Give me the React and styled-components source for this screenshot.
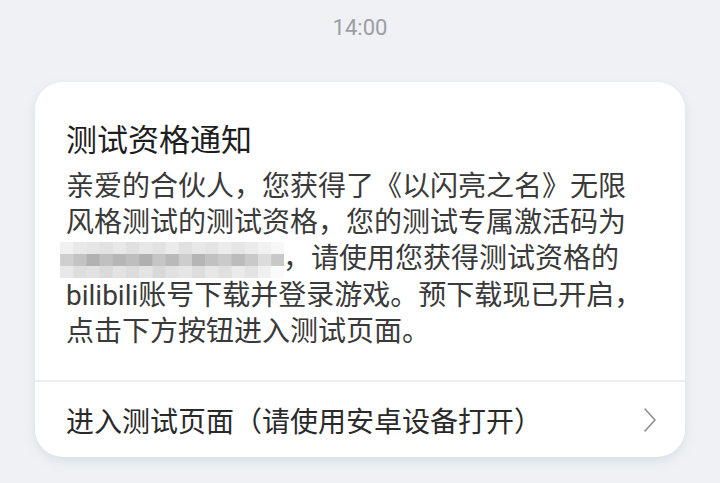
import React from "react";
import styled, { createGlobalStyle } from "styled-components";

const Global = createGlobalStyle`
  html, body { margin: 0; padding: 0; background: #eff1f4; }
  body { width: 720px; height: 483px; overflow: hidden; }
`;

const Page = styled.div`
  width: 720px;
  height: 483px;
  box-sizing: border-box;
  padding: 14px 35px 0 35px;
  display: flex;
  flex-direction: column;
  align-items: stretch;
  font-family: Roboto, "Noto Sans CJK SC", "Noto Sans", sans-serif;
`;

const Time = styled.div`
  font-size: 22px;
  line-height: 28px;
  color: #9b9ea3;
  text-align: center;
`;

const Card = styled.div`
  margin-top: 40px;
  background: #ffffff;
  border-radius: 28px;
  box-shadow: 0 4px 10px rgba(170, 195, 215, 0.35);
  overflow: hidden;
`;

const Content = styled.div`
  padding: 37px 37px 30px 31px;
`;

const Title = styled.div`
  font-size: 31px;
  line-height: 44px;
  color: #1e1e1e;
  margin-bottom: 6px;
`;

const Body = styled.div`
  font-size: 28px;
  line-height: 36px;
  color: #3a3a3a;
`;

const Divider = styled.div`
  height: 2px;
  background: #eceef1;
`;

const Action = styled.div`
  height: 75px;
  display: flex;
  align-items: center;
  justify-content: space-between;
  padding: 0 28px 0 31px;
  font-size: 28px;
  color: #2a2a2a;
`;

const Mosaic = styled.svg`
  display: inline-block;
  vertical-align: -10px;
  margin-left: -6px;
  margin-right: -1px;
`;

const blocks = [
  ["#f1f1f1", "#e9e9e9", "#e6e6e6", "#e2e2e2", "#e8e8e8", "#e0e0e0", "#e7e7e7", "#e3e3e3", "#ebebeb", "#e1e1e1", "#e8e8e8", "#e4e4e4", "#ececec", "#e6e6e6", "#ebebeb", "#f1f1f1", "#f7f7f7"],
  ["#cfcfcf", "#c3c3c3", "#b2b2b2", "#c0c0c0", "#b6b6b6", "#bebebe", "#b0b0b0", "#c5c5c5", "#b9b9b9", "#cdcdcd", "#b5b5b5", "#c1c1c1", "#cacaca", "#bcbcbc", "#c9c9c9", "#dcdcdc", "#c8c8c8"],
  ["#e8e8e8", "#dedede", "#e2e2e2", "#dadada", "#e3e3e3", "#dcdcdc", "#e4e4e4", "#d9d9d9", "#e1e1e1", "#e6e6e6", "#dddddd", "#e7e7e7", "#e0e0e0", "#ebebeb", "#e3e3e3", "#f0f0f0", "#fafafa"],
];

function Pixelated() {
  return (
    <Mosaic width="224" height="36" viewBox="0 0 224 36">
      {blocks.map((row, r) =>
        row.map((c, i) => (
          <rect key={r + "-" + i} x={i * 13.2} y={r * 12} width="13.7" height="12.5" fill={c} />
        ))
      )}
    </Mosaic>
  );
}

const Chevron = () => (
  <svg width="14" height="26" viewBox="0 0 14 26" fill="none">
    <path d="M2 2 L12 13 L2 24" stroke="#8e8e8e" strokeWidth="1.6" strokeLinecap="round" strokeLinejoin="round" />
  </svg>
);

export default function App() {
  return (
    <>
      <Global />
      <Page>
        <Time>14:00</Time>
        <Card>
          <Content>
            <Title>测试资格通知</Title>
            <Body>
              亲爱的合伙人，您获得了《以闪亮之名》无限风格测试的测试资格，您的测试专属激活码为
              <Pixelated />，请使用您获得测试资格的bilibili账号下载并登录游戏。预下载现已开启，点击下方按钮进入测试页面。
            </Body>
          </Content>
          <Divider />
          <Action>
            <span>进入测试页面（请使用安卓设备打开）</span>
            <Chevron />
          </Action>
        </Card>
      </Page>
    </>
  );
}
